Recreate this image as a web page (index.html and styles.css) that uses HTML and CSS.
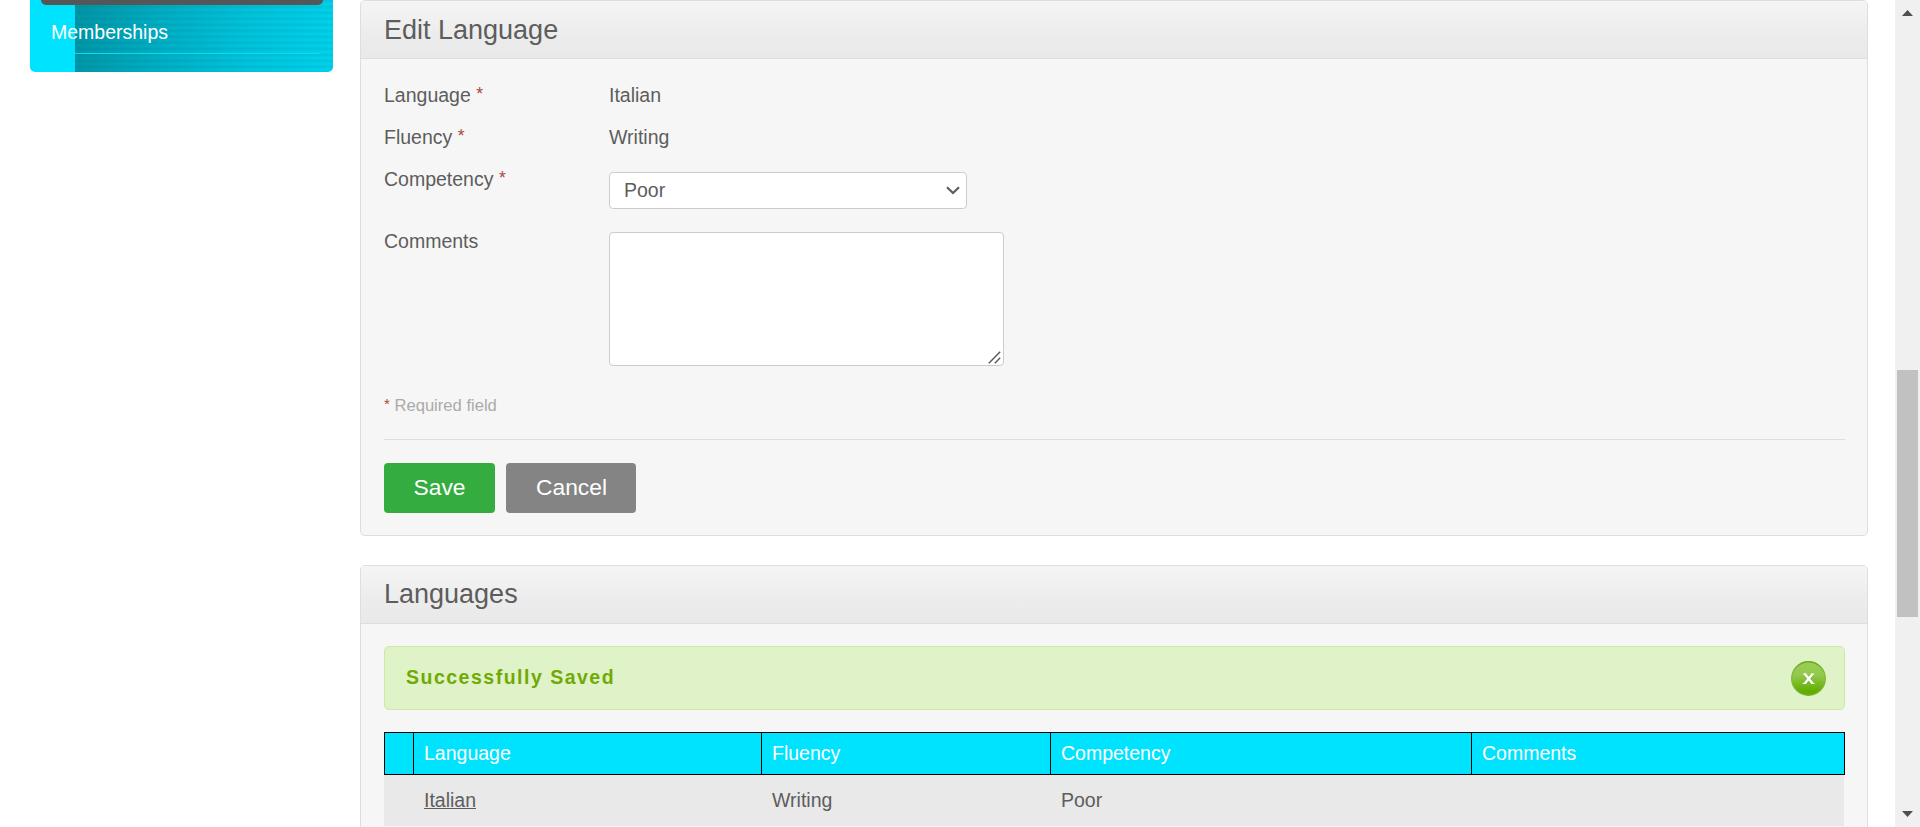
FILE: index.html
```html
<!DOCTYPE html>
<html lang="en">
<head>
<meta charset="utf-8">
<title>Languages</title>
<link rel="stylesheet" href="styles.css">
</head>
<body>
<div class="page">
  <nav class="sidebar">
    <div class="menu-active"></div>
    <a class="menu-item">Memberships</a>
  </nav>
  <main class="content">
    <section class="panel panel-edit">
      <h1 class="panel-head">Edit Language</h1>
      <div class="form">
        <div class="row"><label class="label">Language <em>*</em></label><span>Italian</span></div>
        <div class="row"><label class="label">Fluency <em>*</em></label><span>Writing</span></div>
        <div class="row row-select"><label class="label">Competency <em>*</em></label>
          <div class="select"><span>Poor</span>
            <svg width="14" height="9" viewBox="0 0 14 9"><path d="M1 1.2L7 7L13 1.2" fill="none" stroke="#5d5d5d" stroke-width="2.2"/></svg>
          </div>
        </div>
        <div class="row row-area"><label class="label">Comments</label>
          <div class="area"><svg width="13" height="13" viewBox="0 0 13 13"><path d="M.8 12.2L12.2.8M6.8 12.2L12.2 6.8" fill="none" stroke="#555" stroke-width="1.4"/></svg></div>
        </div>
        <p class="required"><em>*</em> Required field</p>
        <div class="actions">
          <button class="btn btn-save">Save</button>
          <button class="btn btn-cancel">Cancel</button>
        </div>
      </div>
    </section>
    <section class="panel panel-list">
      <h1 class="panel-head">Languages</h1>
      <div class="list">
        <div class="message"><span>Successfully Saved</span>
          <svg class="close" width="35" height="35" viewBox="0 0 35 35">
            <defs>
              <linearGradient id="face" x1="0" y1="0" x2="0" y2="1"><stop offset="0" stop-color="#9bcd58"/><stop offset=".4" stop-color="#92c94b"/><stop offset=".88" stop-color="#62ad00"/><stop offset="1" stop-color="#62aa08"/></linearGradient>
              <linearGradient id="rim" x1="0" y1="0" x2="0" y2="1"><stop offset="0" stop-color="#66aa12"/><stop offset=".4" stop-color="#84bd40"/><stop offset="1" stop-color="#74b62a"/></linearGradient>
            </defs>
            <circle cx="17.5" cy="17.5" r="16.8" fill="url(#face)" stroke="url(#rim)" stroke-width="1.4"/>
            <path d="M13.8 14L21.8 23.4M21.8 14L13.8 23.4" stroke="#6ca82b" stroke-opacity=".5" stroke-width="2.6"/>
            <path d="M13.8 13L21.6 22.4M21.6 13L13.8 22.4" stroke="#fff" stroke-width="2.3"/>
            <path d="M12 13h3.4M20.2 13h3M11.7 22.5h3.6M20 22.5h3.6" stroke="#fff" stroke-width="1.2"/>
          </svg>
        </div>
        <div class="table">
          <div class="trow thead"><span></span><span>Language</span><span>Fluency</span><span>Competency</span><span>Comments</span></div>
          <div class="trow tbody"><span></span><span><a class="link">Italian</a></span><span>Writing</span><span>Poor</span><span></span></div>
        </div>
      </div>
    </section>
  </main>
  <div class="scrollbar">
    <svg width="11" height="6" viewBox="0 0 11 6"><path d="M0 6L5.5 0L11 6z" fill="#505050"/></svg>
    <div class="thumb"></div>
    <svg width="11" height="6" viewBox="0 0 11 6"><path d="M0 0L5.5 6L11 0z" fill="#505050"/></svg>
  </div>
</div>
</body>
</html>
```
FILE: styles.css
```css
* { box-sizing: border-box; }
body {
  margin: 0;
  overflow: hidden;
  background: #fff;
  color: #5d5d5d;
  font-family: "Liberation Sans", Arial, sans-serif;
  font-size: 19.5px;
}
svg { display: block; flex: none; }
em { color: #aa4935; font-size: 17.5px; font-style: normal; line-height: 1; vertical-align: 2px; }
.page { display: flex; height: 827px; padding-left: 30px; overflow: hidden; }

.sidebar {
  flex: none;
  width: 303px;
  height: 72px;
  padding: 0 10px 0 11px;
  border-radius: 0 0 5px 5px;
  background:
    linear-gradient(#00e3ff, #00e3ff) 0 0 / 45px 100% no-repeat,
    linear-gradient(#00def8, #00def8) 45px 53px / 246px 1px no-repeat,
    repeating-linear-gradient(rgba(0,95,115,.11) 0 1px, rgba(0,95,115,.07) 2px, transparent 3px 5px, rgba(0,95,115,.11) 6px),
    linear-gradient(98deg, #0094a4 14%, #00adc2 42%, #00c4dc 72%, #00d2ec 100%);
}
.menu-active { height: 5px; border-radius: 0 0 5px 5px; background: #555658; }
.menu-item { display: block; height: 54px; padding-left: 10px; line-height: 54px; color: #fff; }

.content { width: 1508px; margin-left: 27px; flex: none; }
.panel { border: 1px solid #dedede; border-radius: 5px; background: #f6f6f6; overflow: hidden; }
.panel-edit { height: 536px; }
.panel-list { height: 300px; margin-top: 29px; }
.panel-head {
  margin: 0;
  height: 58px;
  padding: 0 23px;
  border-bottom: 1px solid #dedede;
  background: linear-gradient(#f5f5f5, #ececec 60%, #e9e9e9);
  font-size: 27px;
  font-weight: 400;
  line-height: 57px;
}
.panel-edit .panel-head { line-height: 59px; }
.form { padding: 15px 22px 0 23px; }
.row { display: flex; height: 42px; line-height: 42px; }
.row-select { height: 62px; }
.row-area { height: 165px; }
.label { flex: none; width: 225px; }
.select {
  display: flex;
  align-items: center;
  justify-content: space-between;
  width: 358px;
  height: 37px;
  margin-top: 14px;
  padding: 0 6px 0 14px;
  border: 1px solid #ccc;
  border-radius: 4px;
  background: #fff;
  line-height: 35px;
}
.area {
  display: flex;
  align-items: flex-end;
  justify-content: flex-end;
  width: 395px;
  height: 134px;
  margin-top: 12px;
  padding: 1px 2px;
  border: 1px solid #ccc;
  border-radius: 4px;
  background: #fff;
}
.required { margin: 0; height: 54px; font-size: 16.6px; line-height: 41px; color: #aaa; }
.required em { font-size: 15px; }
.actions { display: flex; gap: 11px; padding-top: 23px; border-top: 1px solid #dedede; }
.btn {
  height: 50px;
  padding: 0 0 2px;
  border: 0;
  border-radius: 4px;
  color: #fff;
  font-family: inherit;
  font-size: 22.8px;
}
.btn-save { width: 111px; background: #34ac40; }
.btn-cancel { width: 130px; padding-left: 1px; background: #848484; }

.list { padding: 22px 22px 0 23px; }
.message {
  display: flex;
  align-items: center;
  justify-content: space-between;
  height: 64px;
  padding: 0 18px 0 21px;
  border: 1px solid #cdeaa2;
  border-radius: 5px;
  background: #dff2c8;
  color: #70aa04;
  font-weight: 700;
  letter-spacing: 1.5px;
}
.message span { padding-bottom: 2px; }
.close { margin-top: 1px; }
.table { margin-top: 22px; }
.trow { display: grid; grid-template-columns: 29px 348px 289px 421px 1fr; }
.thead { height: 43px; border: 1px solid #000; background: #00e3ff; color: #fff; line-height: 41px; }
.thead span { padding-left: 10px; border-right: 1px solid #000; }
.thead span:last-child { border-right: 0; }
.tbody { height: 51px; margin-right: 1px; padding-left: 1px; background: #e9e9e9; line-height: 50px; }
.tbody span { padding-left: 10px; }
.link { text-decoration: underline; }

.scrollbar {
  display: flex;
  flex-direction: column;
  align-items: center;
  width: 25px;
  margin-left: auto;
  padding: 10px 0;
  background: #f0f0f0;
}
.thumb { width: 21px; height: 247px; margin: 354px 0 194px; background: #c1c1c1; }
```
